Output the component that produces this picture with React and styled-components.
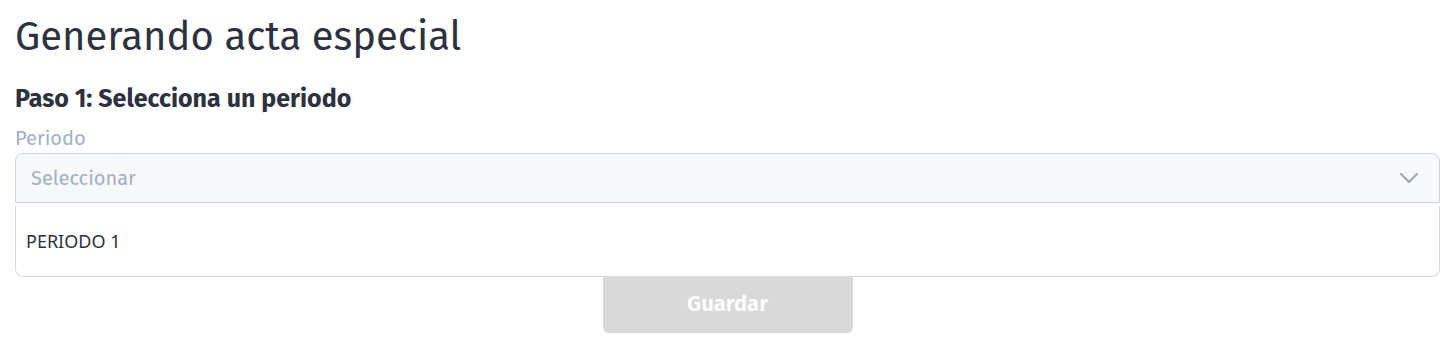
import React from "react";
import styled, { createGlobalStyle } from "styled-components";

const GlobalStyle = createGlobalStyle`
  body {
    margin: 0;
    background: #ffffff;
    font-family: "Fira Sans", "Noto Sans", "Open Sans", sans-serif;
    color: #2d3140;
  }
`;

const Page = styled.div`
  padding: 12px 8px 0 15px;
`;

const Title = styled.h1`
  margin: 0;
  font-size: 40px;
  font-weight: 400;
  line-height: 50px;
  color: #2d3140;
`;

const StepTitle = styled.h3`
  margin: 22px 0 0;
  font-size: 25px;
  font-weight: 700;
  line-height: 30px;
  color: #2d3140;
`;

const Field = styled.div`
  margin-top: 12px;
`;

const Label = styled.label`
  display: block;
  font-size: 20px;
  line-height: 24px;
  color: #a3b0c4;
  margin-bottom: 3px;
`;

const SelectWrap = styled.div`
  position: relative;
`;

const SelectBox = styled.div`
  height: 48px;
  display: flex;
  align-items: center;
  justify-content: space-between;
  padding: 0 20px 0 15px;
  background: #f7f8fa;
  border: 1px solid #cdd5e0;
  border-radius: 8px 8px 0 0;
  color: #a3b0c4;
  font-size: 20px;
`;

const Menu = styled.ul`
  position: absolute;
  left: 0;
  right: 0;
  top: 100%;
  margin: 3px 0 0;
  padding: 0;
  list-style: none;
  background: #ffffff;
  border: 1px solid #d9d9d9;
  border-top: none;
  border-radius: 0 0 8px 8px;
  z-index: 2;
`;

const Option = styled.li`
  height: 70px;
  display: flex;
  align-items: center;
  padding: 0 10px;
  font-family: "Noto Sans", "Open Sans", sans-serif;
  font-size: 18px;
  color: #2d3140;
`;

const Actions = styled.div`
  display: flex;
  justify-content: center;
  margin-top: 70px;
`;

const SaveButton = styled.button`
  width: 250px;
  height: 60px;
  border: none;
  border-radius: 6px;
  background: #d9d9d9;
  color: #ffffff;
  font-family: inherit;
  font-size: 22px;
  font-weight: 600;
  cursor: not-allowed;
`;

const Chevron = () => (
  <svg width="20" height="12" viewBox="0 0 20 12" fill="none">
    <path d="M2 2l8 8 8-8" stroke="#9aa8bf" strokeWidth="2.2" strokeLinecap="round" strokeLinejoin="round" />
  </svg>
);

export default function App() {
  return (
    <>
      <GlobalStyle />
      <Page>
        <Title>Generando acta especial</Title>
        <StepTitle>Paso 1: Selecciona un periodo</StepTitle>
        <Field>
          <Label>Periodo</Label>
          <SelectWrap>
            <SelectBox>
              <span>Seleccionar</span>
              <Chevron />
            </SelectBox>
            <Menu>
              <Option>PERIODO 1</Option>
            </Menu>
          </SelectWrap>
        </Field>
        <Actions>
          <SaveButton disabled>Guardar</SaveButton>
        </Actions>
      </Page>
    </>
  );
}
